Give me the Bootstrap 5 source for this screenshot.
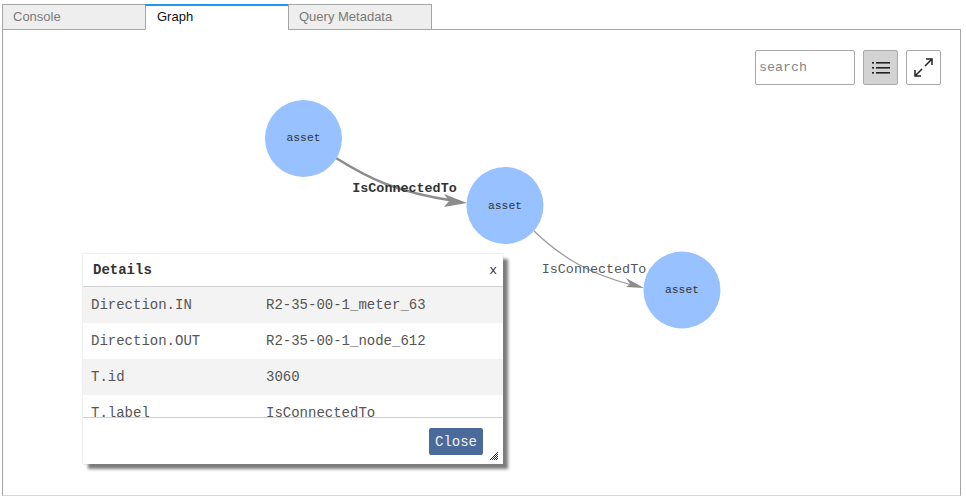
<!DOCTYPE html>
<html lang="en">
<head>
<meta charset="utf-8">
<title>Graph</title>
<link href="https://cdn.jsdelivr.net/npm/bootstrap@5.3.0/dist/css/bootstrap.min.css" rel="stylesheet">
<style>
html,body{height:100%;margin:0;background:#fff;overflow:hidden}
.page-wrap{width:966px;height:497px;padding:4px 5px 1px 2px;display:flex;flex-direction:column}
.tabbar{display:flex;margin:0;padding:0;list-style:none;height:26px;position:relative;z-index:1;flex:none}
.tabbar .nav-link{width:143px;height:26px;padding:4px 0 0 11px;font:13px/16px "Liberation Sans",Arial,sans-serif;color:#7a7a7a;background:#eee;border:1px solid #a5a5a5;border-bottom:1px solid #a5a5a5;border-radius:0;margin-left:-1px}
.tabbar li:first-child .nav-link{margin-left:0;width:144px;padding-left:10px}
.tabbar li:last-child .nav-link{width:144px;padding-left:10px}
.tabbar .nav-link.active{color:#111;background:#fff;border-top:2px solid #2196f3;border-bottom-color:#fff;padding-top:3px;width:144px}
.panel-box{flex:1;position:relative;border:1px solid #a5a5a5;border-bottom-color:#d8d8d8;margin-top:-1px;font-family:"Liberation Mono","Courier New",monospace}
.tools{position:absolute;top:20px;right:19px;gap:8px}
.search-box{width:100px;height:35px;padding:0 3px;font:13.33px "Liberation Mono",monospace;border:1px solid #a8a8a8;border-radius:2px;color:#555}
.search-box::placeholder{color:#858585;opacity:1}
.tool-btn{width:35px;height:35px;padding:0;border:1px solid #a8a8a8;border-radius:2px;background:#fff;display:flex;align-items:center;justify-content:center}
.tool-btn.on{background:#d3d3d3}
.graph-canvas{position:absolute;left:-3px;top:-30px;width:966px;height:497px}
.graph-canvas text{font-family:"Liberation Mono","Courier New",monospace}
.details{position:absolute;left:80px;top:224px;width:420px;height:210px;background:#fff;box-shadow:5px 5px 3px #7c7c7c,0 0 2px #ccc;display:flex;flex-direction:column;color:#444;font-size:14px}
.details-head{height:33px;flex:none;display:flex;justify-content:space-between;align-items:center;padding:0 6px 0 10px;border-bottom:1px solid #d0d0d0}
.details-head b{color:#333;font-size:14px}
.details-x{font-size:13px;color:#333;background:none;border:0;padding:2px 0 0;font-family:inherit}
.details-body{flex:1;overflow:hidden;border-bottom:1px solid #d0d0d0}
.kv{display:flex;height:36px;align-items:center;padding:0 0 0 8px;color:#555}
.kv:nth-child(odd){background:#f3f3f3}
.kv span:first-child{width:175px;flex:none}
.details-foot{height:46px;flex:none;display:flex;justify-content:flex-end;align-items:flex-start;padding:10px 20px 0 0;position:relative}
.close-btn{width:54px;height:27px;padding:0;border:0;border-radius:2px;background:#4a6a9c;color:#f2f2f2;font:14px "Liberation Mono",monospace}
.grip{position:absolute;right:5px;bottom:4px}
</style>
</head>
<body>
<div class="page-wrap">
  <ul class="tabbar nav">
    <li class="nav-item"><a class="nav-link" href="#">Console</a></li>
    <li class="nav-item"><a class="nav-link active" href="#">Graph</a></li>
    <li class="nav-item"><a class="nav-link" href="#">Query Metadata</a></li>
  </ul>
  <div class="panel-box">
    <svg class="graph-canvas" viewBox="0 0 966 497">
      <path d="M336 158C368 178 395 192 455 201" fill="none" stroke="#8c8c8c" stroke-width="2.6"/>
      <polygon points="467,203 444,194 449,201 444,207" fill="#8c8c8c"/>
      <path d="M534 231C562 258 590 274 632 285" fill="none" stroke="#999" stroke-width="1.2"/>
      <polygon points="644,288 626,278 630,284 626,287" fill="#8c8c8c"/>
      <circle cx="303.500" cy="138.500" r="38.500" fill="#97c1ff"/>
      <circle cx="505" cy="205.500" r="38.500" fill="#97c1ff"/>
      <circle cx="682" cy="290" r="38.500" fill="#97c1ff"/>
      <text x="303.500" y="141" text-anchor="middle" font-size="11.300" fill="#333">asset</text>
      <text x="505" y="209" text-anchor="middle" font-size="11.300" fill="#333">asset</text>
      <text x="682" y="293" text-anchor="middle" font-size="11.300" fill="#333">asset</text>
      <text x="404.500" y="192" text-anchor="middle" font-size="13.400" font-weight="700" fill="#333">IsConnectedTo</text>
      <text x="594" y="273" text-anchor="middle" font-size="13.400" fill="#555">IsConnectedTo</text>
    </svg>
    <div class="tools d-flex">
      <input class="search-box" type="text" placeholder="search" aria-label="search">
      <button class="tool-btn on" type="button" aria-label="List">
        <svg width="18" height="14" viewBox="0 0 18 14"><g fill="#222"><rect x="0" y="1" width="2" height="1.600"/><rect x="0" y="6" width="2" height="1.600"/><rect x="0" y="11" width="2" height="1.600"/><rect x="4" y="1" width="14" height="1.600"/><rect x="4" y="6" width="14" height="1.600"/><rect x="4" y="11" width="14" height="1.600"/></g></svg>
      </button>
      <button class="tool-btn" type="button" aria-label="Expand">
        <svg width="19" height="19" viewBox="0 0 19 19" fill="none" stroke="#222" stroke-width="1.500"><path d="M11 8 18 1M12 1h6v6M8 11 1 18M1 12v6h6"/></svg>
      </button>
    </div>
    <div class="details">
      <div class="details-head"><b>Details</b><button class="details-x" type="button">x</button></div>
      <div class="details-body">
        <div class="kv"><span>Direction.IN</span><span>R2-35-00-1_meter_63</span></div>
        <div class="kv"><span>Direction.OUT</span><span>R2-35-00-1_node_612</span></div>
        <div class="kv"><span>T.id</span><span>3060</span></div>
        <div class="kv"><span>T.label</span><span>IsConnectedTo</span></div>
      </div>
      <div class="details-foot">
        <button class="close-btn" type="button">Close</button>
        <svg class="grip" width="8" height="8" viewBox="0 0 8 8" stroke="#333" stroke-width="1"><path d="M0 8 8 0M2 8 8 2M4 8 8 4M6 8 8 6"/></svg>
      </div>
    </div>
  </div>
</div>
<script src="https://cdn.jsdelivr.net/npm/bootstrap@5.3.0/dist/js/bootstrap.bundle.min.js"></script>
</body>
</html>
